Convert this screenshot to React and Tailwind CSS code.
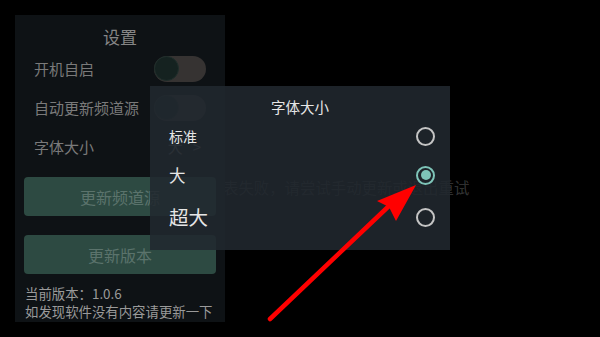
import React from "react";

function Toggle() {
  return (
    <div className="w-[52px] h-[26px] shrink-0 rounded-full bg-[#363332] flex items-center">
      <div className="w-[25px] h-[25px] rounded-full bg-[#152220] border border-[#1f2e2b]" />
    </div>
  );
}

function Radio({ checked }) {
  return (
    <div
      className={
        checked
          ? "w-[19px] h-[19px] rounded-full border-2 border-[#7ec4b8] flex items-center justify-center"
          : "w-[19px] h-[19px] rounded-full border-2 border-[#c4c4c4]"
      }
    >
      {checked && <div className="w-[10px] h-[10px] rounded-full bg-[#7ec4b8]" />}
    </div>
  );
}

export default function App() {
  return (
    <div
      className="relative w-[600px] h-[337px] bg-black overflow-hidden"
      style={{ fontFamily: '"Noto Sans CJK SC", "Noto Sans", sans-serif' }}
    >
      <div className="absolute left-0 right-0 top-[176px] text-center text-[15.4px] leading-[22px] text-[rgba(255,255,255,0.21)] whitespace-nowrap">
        加载频道源列表失败，请尝试手动更新或退出重试
      </div>

      <div className="relative pt-[15px] pl-[15px]">
        <div className="w-[210px] h-[307px] bg-[#0e1215] overflow-hidden flex flex-col">
          <div className="shrink-0 mt-[11px] h-[22px] text-[17px] leading-[22px] text-center text-[#858585]">设置</div>
          <div className="shrink-0 mt-[1px] h-[39px] flex items-center justify-between pl-[19px] pr-[19px]">
            <span className="text-[15px] leading-[20px] text-[#7a7a7a]">开机自启</span>
            <Toggle />
          </div>
          <div className="shrink-0 h-[39px] flex items-center justify-between pl-[19px] pr-[19px]">
            <span className="text-[15px] leading-[20px] text-[#7a7a7a]">自动更新频道源</span>
            <Toggle />
          </div>
          <div className="shrink-0 h-[39px] flex items-center justify-between pl-[19px] pr-[24px]">
            <span className="text-[15px] leading-[20px] text-[#7a7a7a]">字体大小</span>
            <span className="text-[15px] leading-[20px] text-[#6a6a6a] flex items-center gap-[10px]">
              <span>大</span>
              <span>&gt;</span>
            </span>
          </div>
          <div className="shrink-0 mt-[11px] mx-[9px] h-[39px] rounded-[4px] bg-[#2d4a42] flex items-center justify-center text-[16px] text-[#5b736c]">
            更新频道源
          </div>
          <div className="shrink-0 mt-[19px] mx-[9px] h-[39px] rounded-[4px] bg-[#2d4a42] flex items-center justify-center text-[16px] text-[#5b736c]">
            更新版本
          </div>
          <div className="shrink-0 mt-[10px] pl-[10px] text-[13.4px] leading-[18px] text-[#9a9a9a] whitespace-nowrap">
            <div>当前版本：1.0.6</div>
            <div>如发现软件没有内容请更新一下</div>
            <div>版本，或更新频道源列表后再试</div>
          </div>
        </div>
      </div>

      <div className="absolute left-[150px] top-[86px] w-[300px] h-[164px] bg-[rgba(33,40,47,0.88)] flex flex-col">
        <div className="shrink-0 pt-[10px] h-[31px] leading-[21px] text-center text-[14.5px] text-[#e6e6e6]">字体大小</div>
        <div className="shrink-0 h-[38px] flex items-center justify-between pl-[19px] pr-[15px]">
          <span className="text-[14px] leading-[20px] text-[#e6e6e6]">标准</span>
          <Radio />
        </div>
        <div className="shrink-0 h-[40px] flex items-center justify-between pl-[19px] pr-[15px]">
          <span className="text-[16.5px] leading-[22px] text-[#e6e6e6]">大</span>
          <Radio checked />
        </div>
        <div className="shrink-0 h-[44px] flex items-center justify-between pl-[19px] pr-[15px]">
          <span className="text-[19.5px] leading-[26px] text-[#e6e6e6]">超大</span>
          <Radio />
        </div>
      </div>

      <svg className="absolute left-0 top-0" width="600" height="337" viewBox="0 0 600 337">
        <line x1="270" y1="319" x2="390" y2="205" stroke="#ff0000" strokeWidth="4.5" strokeLinecap="round" />
        <polygon points="416,185 377,201 389,207 396,221" fill="#ff0000" />
      </svg>
    </div>
  );
}
